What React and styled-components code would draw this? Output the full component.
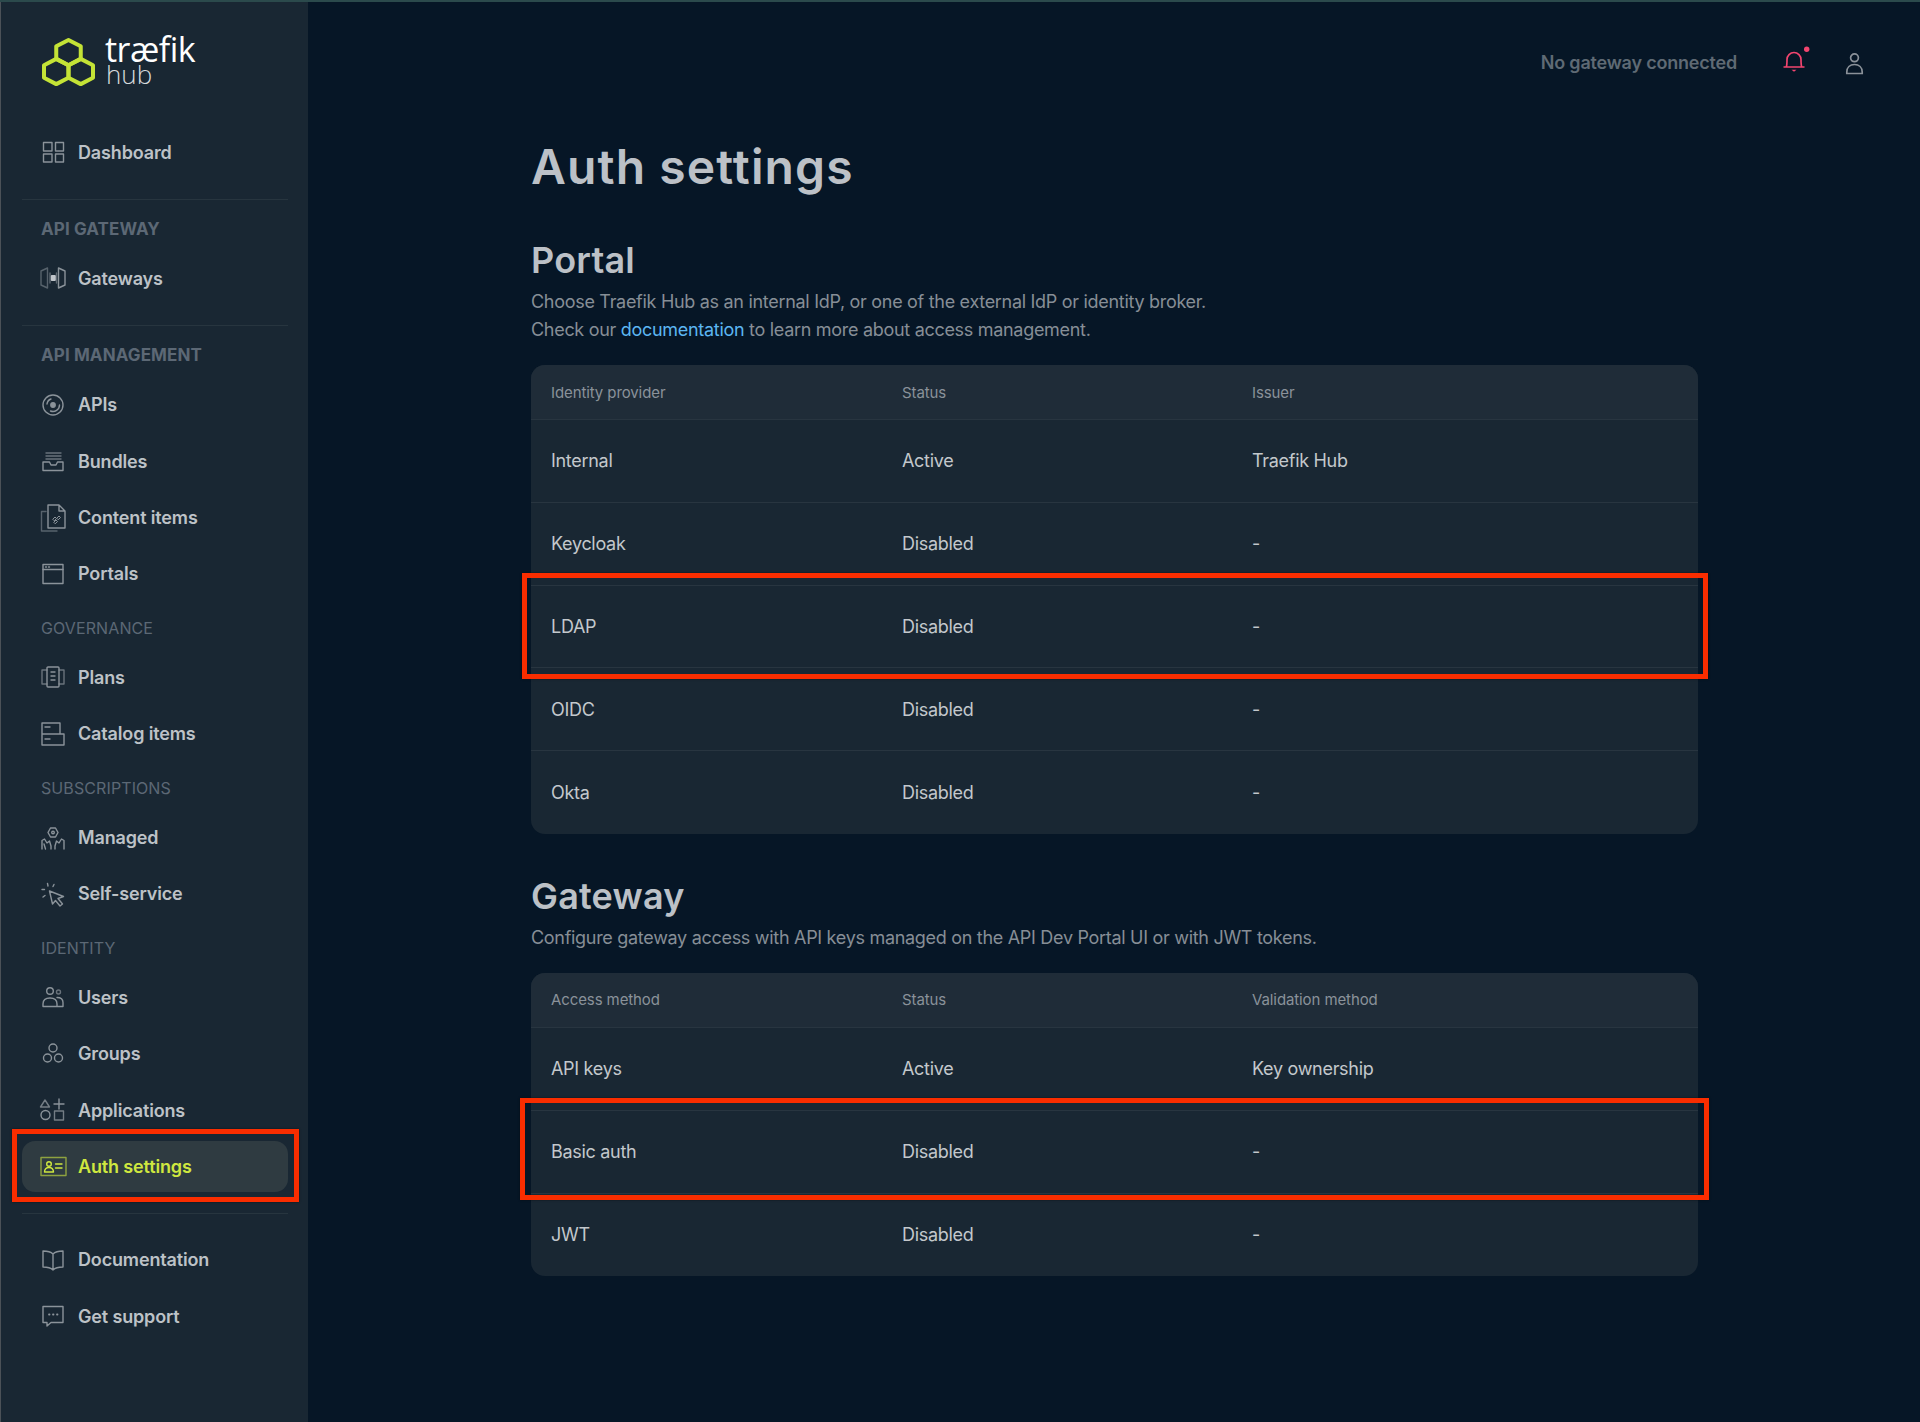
import React from 'react';
import styled, { createGlobalStyle } from 'styled-components';

const GlobalStyle = createGlobalStyle`
  * { box-sizing: border-box; }
  html, body { margin: 0; padding: 0; background: #061626; }
  body { font-family: 'Inter', 'Liberation Sans', sans-serif; }
`;

const Page = styled.div`
  display: grid;
  grid-template-columns: 308px 1fr;
  min-height: 1422px;
  background: #061626;
  border-top: 2px solid #2b4a4c;
`;

const Sidebar = styled.aside`
  display: flex;
  flex-direction: column;
  padding: 0 20px 0 22px;
  background: #192733;
  box-shadow: inset 1px 0 0 #4b5157;
`;

const Logo = styled.a`
  display: flex;
  align-items: center;
  gap: 9px;
  height: 124.5px;
  margin-left: 19px;
  padding-bottom: 5px;
  color: #fff;
  text-decoration: none;
`;

const LogoWords = styled.div`
  display: flex;
  flex-direction: column;
  margin-bottom: 5px;
  font-family: 'Open Sans', sans-serif;
`;

const LogoName = styled.span`
  font-size: 34px;
  line-height: 32px;
  letter-spacing: -0.5px;
  font-weight: 400;
`;

const LogoSub = styled.span`
  font-size: 26px;
  line-height: 24px;
  margin: -3px 0 0 1px;
  font-weight: 300;
  color: #d6dadd;
`;

const NavGroup = styled.nav`
  display: flex;
  flex-direction: column;
  gap: 5px;
`;

const FooterGroup = styled(NavGroup)`
  margin-top: 20px;
`;

const NavItem = styled.a`
  display: flex;
  align-items: center;
  gap: 12px;
  height: 51.3px;
  padding: 0 18px;
  border-radius: 13px;
  font-size: 18px;
  font-weight: 600;
  letter-spacing: -0.15px;
  text-decoration: none;
  color: ${p => (p.$active ? '#cfe83f' : '#bdc2c7')};
  background: ${p => (p.$active ? '#2f3b41' : 'transparent')};
  position: relative;
`;

const Divider = styled.hr`
  width: 100%;
  height: 1px;
  margin: 21px 0 0;
  border: 0;
  background: #27353f;
`;

const SectionLabel = styled.div`
  height: 24px;
  line-height: 24px;
  margin: ${p => (p.$strong ? '17px' : '16.5px')} 0 12px 19px;
  font-size: ${p => (p.$strong ? '17px' : '16px')};
  font-weight: ${p => (p.$strong ? 700 : 400)};
  letter-spacing: ${p => (p.$strong ? '0.1px' : '0.1px')};
  color: #5c6875;
`;

const IconSvg = styled.svg`
  flex: none;
  width: 26px;
  height: 26px;
  overflow: visible;
  fill: none;
  stroke: ${p => p.$color || '#8b939a'};
  stroke-width: 1.4;
  stroke-linejoin: round;
  stroke-linecap: round;
`;

const Main = styled.main`
  display: flex;
  flex-direction: column;
  min-width: 0;
`;

const Topbar = styled.header`
  display: flex;
  align-items: center;
  justify-content: flex-end;
  gap: 46px;
  height: 120px;
  padding: 0 57px 0 0;
`;

const GatewayState = styled.span`
  font-size: 18px;
  font-weight: 600;
  letter-spacing: -0.2px;
  color: #5f6a74;
`;

const TopIcons = styled.div`
  display: flex;
  align-items: center;
  gap: 40px;
`;

const TopButton = styled.span`
  display: block;
  width: ${p => p.$w}px;
  height: ${p => p.$h}px;
  margin-top: ${p => p.$mt}px;
`;

const TopSvg = styled.svg`
  display: block;
  overflow: visible;
  fill: none;
  stroke: ${p => p.$color};
  stroke-width: 1.7;
`;

const Content = styled.div`
  display: flex;
  flex-direction: column;
  padding: 0 222px 0 223px;
`;

const Title = styled.h1`
  margin: 15px 0 0;
  font-size: 48px;
  line-height: 60px;
  font-weight: 600;
  letter-spacing: 1.1px;
  color: #bcc1c7;
`;

const Heading = styled.h2`
  margin: ${p => p.$mt}px 0 0;
  font-size: 36px;
  line-height: 44px;
  font-weight: 600;
  letter-spacing: 0.2px;
  color: #bcc1c7;
`;

const Description = styled.p`
  margin: 6px 0 21px;
  font-size: 18px;
  line-height: 28px;
  letter-spacing: -0.3px;
  color: #868e96;
`;

const DocLink = styled.a`
  color: #5cb6f2;
  text-decoration: none;
`;

const Card = styled.div`
  border-radius: 14px;
  background: #192733;
`;

const Row = styled.div`
  position: relative;
  display: grid;
  grid-template-columns: 351px 350px 1fr;
  align-items: center;
  height: 82.8px;
  font-size: 18px;
  letter-spacing: -0.3px;
  color: #c3c8cc;
  border-bottom: 1px solid ${p => (p.$last ? 'transparent' : '#283540')};
`;

const HeadRow = styled(Row)`
  height: 55px;
  font-size: 15px;
  letter-spacing: -0.1px;
  color: #8a929a;
  background: #1f2c38;
  border-radius: 14px 14px 0 0;
`;

const Cell = styled.div`
  padding-left: 20px;
`;

const RedMark = styled.span`
  position: absolute;
  inset: ${p => p.$inset};
  border: 5px solid #f92d00;
  box-shadow: 0 0 2px rgba(0, 0, 0, 0.5);
  pointer-events: none;
`;

const Dim = ({ children }) => <g strokeOpacity="0.55">{children}</g>;

const icons = {
  dashboard: (
    <>
      <rect x="3.5" y="3.5" width="8.5" height="8.5" />
      <rect x="15.5" y="3.5" width="8" height="8.5" />
      <rect x="3.5" y="15" width="8.5" height="8" />
      <rect x="15.5" y="15" width="8" height="8" />
    </>
  ),
  gateways: (
    <>
      <Dim><path d="M7.5 3 1 6v14l6.5 3z" /></Dim>
      <path d="M18.5 3 25 6v14l-6.500 3z" />
      <path d="M10 8v10M16.500 8v10" strokeOpacity="0.6" />
      <rect x="10.800" y="10" width="5" height="6" rx="1" fill="#c0c5ca" stroke="none" />
    </>
  ),
  apis: (
    <>
      <circle cx="13" cy="13" r="10" />
      <circle cx="13" cy="13" r="2.200" fill="#8b939a" />
      <path d="M7 12a6 6 0 0 1 4-5M19.500 13a6.500 6.500 0 0 1-9 6" />
    </>
  ),
  bundles: (
    <>
      <path d="M6 5h15M6 8h15M6 11h15" strokeOpacity="0.7" />
      <path d="M3 14h6.500l1.500 3h5l1.500-3H23v8.500H3z" />
    </>
  ),
  content: (
    <>
      <Dim><path d="M6 7.500H1.500V27H17" /></Dim>
      <path d="M8 1h11l6 6v17H8zM19 1v6h6" />
      <path d="m13 15 2-2 1.500 1.500-2 2zM17 14l2-2 1.500 1.500-2 2zM14 18l2-2 1.500 1.500-2 2z" strokeWidth="1" />
    </>
  ),
  portals: (
    <>
      <rect x="3" y="3.500" width="20" height="19" />
      <path d="M3 8.500h20" />
      <path d="M5.500 6h1M8.500 6h1" />
    </>
  ),
  plans: (
    <>
      <rect x="7" y="3" width="12" height="20" rx="1" />
      <path d="M7 6H2v14h5M19 6h5v14h-5" strokeOpacity="0.7" />
      <path d="M11 8h4M11 12h4M11 16h4" />
    </>
  ),
  catalog: (
    <>
      <path d="M2 2h18v11H2zM2 13v11h22V13H20" />
      <path d="M5 6h5M5 18h5" />
    </>
  ),
  managed: (
    <>
      <path d="M8 7.500 10.500 3h5L18 7.500 15.500 12h-5z" />
      <circle cx="13" cy="7.500" r="1.300" />
      <path d="M2 24v-8.500l2.500-1.500L7 18l2.500-2L11 21v3M24 24v-8.500L21.500 14 19 18l-2.500-2L15 21v3M5.500 24l-1.500-5" />
    </>
  ),
  selfService: (
    <>
      <path d="m9.500 10 14 5.500-5.500 2 4.500 5.500-2.500 2-4.500-5.500-3 3.500z" />
      <path d="M7.500 2.500 8 5M14 3.500 13 5.500M2 8.500h2.500M3 16l2-1.500" />
    </>
  ),
  users: (
    <>
      <circle cx="10" cy="6" r="3.300" />
      <circle cx="18.500" cy="7" r="2" strokeOpacity="0.7" />
      <path d="M3 21.500v-2.500c0-4 3-6 7-6s7 2 7 6v2.500zM17 12.500c3.500 0 6 1.500 6 5v4h-6" />
    </>
  ),
  groups: (
    <>
      <circle cx="13" cy="7" r="4" />
      <circle cx="7.500" cy="17" r="4" />
      <circle cx="18.500" cy="17" r="4" />
    </>
  ),
  applications: (
    <>
      <path d="m5 3 4.500 7h-9z" strokeOpacity="0.8" />
      <path d="M19 2v10M14 7h10" />
      <circle cx="5.500" cy="18" r="4.500" />
      <rect x="14.500" y="14" width="9" height="9" strokeOpacity="0.8" />
    </>
  ),
  auth: (
    <>
      <rect x="1" y="3.500" width="25" height="18" strokeOpacity="0.6" />
      <circle cx="9" cy="10" r="2.300" />
      <path d="M4.500 18c0-3 2-4.500 4.500-4.500s4.500 1.500 4.500 4.500zM15.500 10H22M15.500 14H22" />
    </>
  ),
  docs: (
    <>
      <path d="M13 7c-2-2-6-3-10-3v16c4 0 8 1 10 3 2-2 6-3 10-3V4c-4 0-8 1-10 3zM13 7v16" />
    </>
  ),
  support: (
    <>
      <path d="M3 3.500h20v16H11l-4 3.500v-3.500H3z" />
      <path d="M9 11.500h.5M13 11.500h.5M17 11.500h.5" strokeWidth="1.800" />
    </>
  ),
};

const NavIcon = ({ name, color }) => (
  <IconSvg viewBox="0 0 26 26" $color={color}>{icons[name]}</IconSvg>
);

const hexPoints = (cx, cy) => [
  [cx, cy - 12.6],
  [cx + 12.25, cy - 6.3],
  [cx + 12.25, cy + 6.3],
  [cx, cy + 12.6],
  [cx - 12.25, cy + 6.3],
  [cx - 12.25, cy - 6.3],
].map(p => p.join(',')).join(' ');

const HubLogo = () => (
  <svg width="55" height="50" viewBox="0 0 55 50" fill="none" stroke="#c4e336" strokeWidth="4" strokeLinejoin="round">
    <polygon points={hexPoints(27.5, 15.6)} />
    <polygon points={hexPoints(15.25, 34.5)} />
    <polygon points={hexPoints(39.75, 34.5)} />
  </svg>
);

const portalRows = [
  ['Internal', 'Active', 'Traefik Hub'],
  ['Keycloak', 'Disabled', '-'],
  ['LDAP', 'Disabled', '-', '-12.500px -10px -11.600px -9px'],
  ['OIDC', 'Disabled', '-'],
  ['Okta', 'Disabled', '-'],
];

const gatewayRows = [
  ['API keys', 'Active', 'Key ownership'],
  ['Basic auth', 'Disabled', '-', '-12.800px -11px -7.400px -11px'],
  ['JWT', 'Disabled', '-'],
];

const DataTable = ({ head, rows }) => (
  <Card>
    <HeadRow>
      {head.map(h => <Cell key={h}>{h}</Cell>)}
    </HeadRow>
    {rows.map(([a, b, c, mark], i) => (
      <Row key={a} $last={i === rows.length - 1}>
        <Cell>{a}</Cell>
        <Cell>{b}</Cell>
        <Cell>{c}</Cell>
        {mark && <RedMark $inset={mark} />}
      </Row>
    ))}
  </Card>
);

const App = () => (
  <>
    <GlobalStyle />
    <Page>
      <Sidebar>
        <Logo href="#">
          <HubLogo />
          <LogoWords>
            <LogoName>træfik</LogoName>
            <LogoSub>hub</LogoSub>
          </LogoWords>
        </Logo>
        <NavGroup>
          <NavItem href="#"><NavIcon name="dashboard" />Dashboard</NavItem>
        </NavGroup>
        <Divider />
        <SectionLabel $strong>API GATEWAY</SectionLabel>
        <NavGroup>
          <NavItem href="#"><NavIcon name="gateways" />Gateways</NavItem>
        </NavGroup>
        <Divider />
        <SectionLabel $strong>API MANAGEMENT</SectionLabel>
        <NavGroup>
          <NavItem href="#"><NavIcon name="apis" />APIs</NavItem>
          <NavItem href="#"><NavIcon name="bundles" />Bundles</NavItem>
          <NavItem href="#"><NavIcon name="content" />Content items</NavItem>
          <NavItem href="#"><NavIcon name="portals" />Portals</NavItem>
        </NavGroup>
        <SectionLabel>GOVERNANCE</SectionLabel>
        <NavGroup>
          <NavItem href="#"><NavIcon name="plans" />Plans</NavItem>
          <NavItem href="#"><NavIcon name="catalog" />Catalog items</NavItem>
        </NavGroup>
        <SectionLabel>SUBSCRIPTIONS</SectionLabel>
        <NavGroup>
          <NavItem href="#"><NavIcon name="managed" />Managed</NavItem>
          <NavItem href="#"><NavIcon name="selfService" />Self-service</NavItem>
        </NavGroup>
        <SectionLabel>IDENTITY</SectionLabel>
        <NavGroup>
          <NavItem href="#"><NavIcon name="users" />Users</NavItem>
          <NavItem href="#"><NavIcon name="groups" />Groups</NavItem>
          <NavItem href="#"><NavIcon name="applications" />Applications</NavItem>
          <NavItem href="#" $active>
            <NavIcon name="auth" color="#cfe83f" />Auth settings
            <RedMark $inset="-12px -11px -10px -10px" />
          </NavItem>
        </NavGroup>
        <Divider />
        <FooterGroup>
          <NavItem href="#"><NavIcon name="docs" />Documentation</NavItem>
          <NavItem href="#"><NavIcon name="support" />Get support</NavItem>
        </FooterGroup>
      </Sidebar>
      <Main>
        <Topbar>
          <GatewayState>No gateway connected</GatewayState>
          <TopIcons>
            <TopButton $w={23} $h={26} $mt={-2}>
              <TopSvg width="26" height="26" viewBox="0 0 26 26" $color="#f2456f">
                <path d="M0.500 19H21.500M3.200 19c.8-1.500.8-3.500.8-7.500a7 7 0 0 1 14 0c0 4 0 6 .8 7.500" />
                <path d="M8.500 21.700h5l-2.500 2z" fill="#f2456f" stroke="none" />
                <circle cx="23.700" cy="1.300" r="2.700" fill="#f2456f" stroke="none" />
              </TopSvg>
            </TopButton>
            <TopButton $w={17} $h={22} $mt={3}>
              <TopSvg width="17" height="22" viewBox="0 0 17 22" $color="#8a9199">
                <circle cx="8.500" cy="4.800" r="3.900" />
                <path d="M.8 20.500V19c0-4.500 3.200-7.500 7.700-7.500s7.700 3 7.700 7.500v1.500z" />
              </TopSvg>
            </TopButton>
          </TopIcons>
        </Topbar>
        <Content>
          <Title>Auth settings</Title>
          <Heading $mt={41}>Portal</Heading>
          <Description>
            Choose Traefik Hub as an internal IdP, or one of the external IdP or identity broker.
            <br />
            Check our <DocLink href="#">documentation</DocLink> to learn more about access management.
          </Description>
          <DataTable head={['Identity provider', 'Status', 'Issuer']} rows={portalRows} />
          <Heading $mt={40}>Gateway</Heading>
          <Description>
            Configure gateway access with API keys managed on the API Dev Portal UI or with JWT tokens.
          </Description>
          <DataTable head={['Access method', 'Status', 'Validation method']} rows={gatewayRows} />
        </Content>
      </Main>
    </Page>
  </>
);

export default App;
